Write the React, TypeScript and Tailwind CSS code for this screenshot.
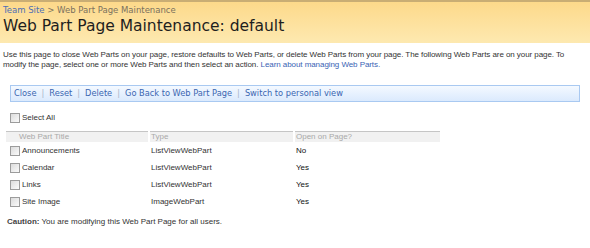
const parts = [
  { title: "Announcements", type: "ListViewWebPart", open: "No" },
  { title: "Calendar", type: "ListViewWebPart", open: "Yes" },
  { title: "Links", type: "ListViewWebPart", open: "Yes" },
  { title: "Site Image", type: "ImageWebPart", open: "Yes" },
];

const actions = ["Close", "Reset", "Delete", "Go Back to Web Part Page", "Switch to personal view"];

const Box = () => (
  <span className="inline-block w-[10px] h-[10px] border border-[#9c9c9c] bg-gradient-to-br from-[#dcdcdc] to-[#fbfbfb] mr-[2px] shrink-0" />
);

export default function App() {
  return (
    <div className="w-[590px] h-[248px] bg-white overflow-hidden font-['Liberation_Sans',sans-serif] text-[8px] text-[#333]">
      {/* title area */}
      <div className="h-[43px] border-t-2 border-[#c9ad74] bg-gradient-to-b from-[#fdd98a] to-[#fde9b0] px-[3px] pt-[3px]">
        <div className="font-['DejaVu_Sans',sans-serif] text-[8.5px] leading-[10px] text-[#7b715e]">
          <span className="text-[#4e6fb5]">Team Site</span> &gt; Web Part Page Maintenance
        </div>
        <h1 className="font-['DejaVu_Sans',sans-serif] text-[15.5px] leading-[22px] text-[#1e1e1e]">
          Web Part Page Maintenance: default
        </h1>
      </div>

      <p className="px-[3px] mt-[7px] leading-[10px] text-[#333] tracking-[-0.07px] whitespace-nowrap">
        Use this page to close Web Parts on your page, restore defaults to Web Parts, or delete Web Parts from your page. The following Web Parts are on your page. To
        <br />
        modify the page, select one or more Web Parts and then select an action. <span className="text-[#3a63b4]">Learn about managing Web Parts.</span>
      </p>

      {/* toolbar */}
      <div className="ml-[10px] mt-[15px] w-[570px] h-[17px] border border-[#a9c9f1] bg-gradient-to-b from-[#f4f9ff] to-[#dbeafd] flex items-center px-[3px] font-['DejaVu_Sans',sans-serif] text-[8.25px] text-[#3b66b1]">
        {actions.map((a, i) => (
          <span key={a} className="flex items-center">
            {i > 0 && <span className="text-[#a7b6c9] px-[5px]">|</span>}
            {a}
          </span>
        ))}
      </div>

      <div className="ml-[10px] mt-[11px] flex items-center h-[10px]">
        <Box />
        <span>Select All</span>
      </div>

      {/* table */}
      <div className="ml-[6px] mt-[8px] grid grid-cols-[142px_143px_145px] gap-x-[2px]">
        <div className="h-[11px] border-t border-[#c5c5c5] bg-[#f1f1f1] text-[#a9a9a9] pl-[13px] leading-[10px]">Web Part Title</div>
        <div className="h-[11px] border-t border-[#c5c5c5] bg-[#f1f1f1] text-[#a9a9a9] pl-[1px] leading-[10px]">Type</div>
        <div className="h-[11px] border-t border-[#c5c5c5] bg-[#f1f1f1] text-[#a9a9a9] pl-[1px] leading-[10px]">Open on Page?</div>
        {parts.map((p) => (
          <div key={p.title} className="contents">
            <div className="h-[16px] flex items-center pl-[4px] mt-[1px]">
              <Box />
              <span>{p.title}</span>
            </div>
            <div className="h-[16px] flex items-center pl-[1px] mt-[1px]">{p.type}</div>
            <div className="h-[16px] flex items-center pl-[1px] mt-[1px] text-[#111]">{p.open}</div>
          </div>
        ))}
      </div>

      <div className="ml-[7px] mt-[6px]">
        <span className="font-bold text-[#444]">Caution:</span> You are modifying this Web Part Page for all users.
      </div>
    </div>
  );
}
